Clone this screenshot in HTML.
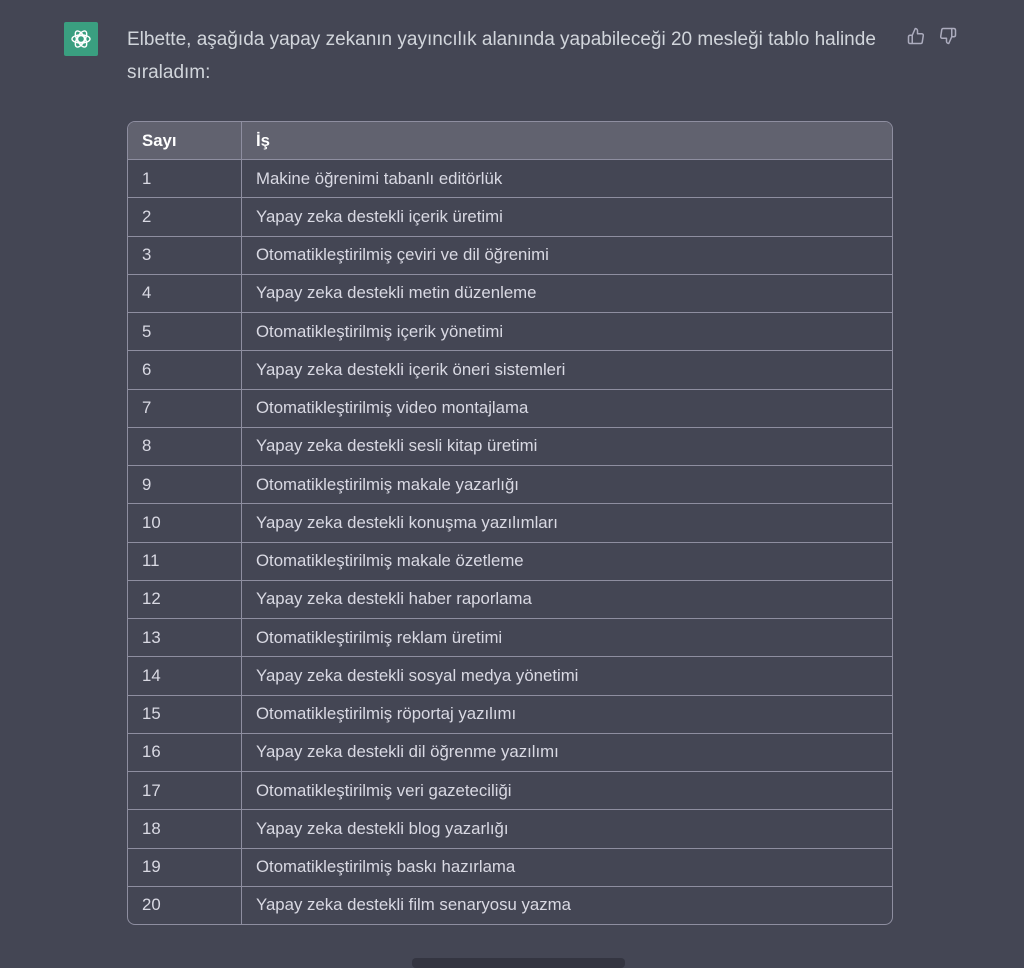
<!DOCTYPE html>
<html><head><meta charset="utf-8"><style>
body{margin:0;width:1024px;height:962px;background:#444654;font-family:"Liberation Sans",Helvetica,Arial,sans-serif;color:#ececf1;overflow:hidden;position:relative}
.av{position:absolute;left:64px;top:22px;width:34px;height:34px;background:#3a9f80;border-radius:2px;display:flex;align-items:center;justify-content:center}
.txt{position:absolute;left:127px;top:23px;width:760px;font-size:19px;line-height:33px;color:#d1d5db}
.icons{position:absolute;left:907px;top:27px;display:flex;gap:14px}
table{position:absolute;left:127px;top:121px;width:766px;border-collapse:separate;border-spacing:0;border:1px solid #8e8ea0;border-radius:8px;overflow:hidden;font-size:16.8px;color:#d9d9e3}
th,td{height:37.25px;padding:0 0 0 14px;text-align:left;border-bottom:1px solid #8e8ea0}
th{background:#61626f;font-weight:bold;height:37px;color:#fff}
tr:last-child td{border-bottom:none}
td:first-child,th:first-child{width:99px;border-right:1px solid #8e8ea0}
.bot{position:absolute;left:412px;top:958px;width:213px;height:10px;background:#343541;border-radius:4px}
</style></head><body>
<div class="av"><svg width="24" height="24" viewBox="0 0 24 24" fill="none" stroke="#fff" stroke-width="1.4"><circle cx="12" cy="12" r="3.5"/><ellipse cx="12" cy="12" rx="9" ry="4"/><ellipse cx="12" cy="12" rx="9" ry="4" transform="rotate(60 12 12)"/><ellipse cx="12" cy="12" rx="9" ry="4" transform="rotate(120 12 12)"/></svg></div>
<div class="txt">Elbette, aşağıda yapay zekanın yayıncılık alanında yapabileceği 20 mesleği tablo halinde sıraladım:</div>
<div class="icons">
<svg width="18" height="18" viewBox="0 0 24 24" fill="none" stroke="#acacbe" stroke-width="2" stroke-linejoin="round"><path d="M14 9V5a3 3 0 0 0-3-3l-4 9v11h11.3a2 2 0 0 0 2-1.7l1.4-9a2 2 0 0 0-2-2.3z"/><path d="M7 22H4a2 2 0 0 1-2-2v-7a2 2 0 0 1 2-2h3"/></svg>
<svg width="18" height="18" viewBox="0 0 24 24" fill="none" stroke="#acacbe" stroke-width="2" stroke-linejoin="round"><path d="M10 15v4a3 3 0 0 0 3 3l4-9V2H5.7a2 2 0 0 0-2 1.7l-1.4 9a2 2 0 0 0 2 2.3z"/><path d="M17 2h2.7A2.3 2.3 0 0 1 22 4v7a2.3 2.3 0 0 1-2.3 2H17"/></svg>
</div>
<table>
<tr><th>Sayı</th><th>İş</th></tr>
<tr><td>1</td><td>Makine öğrenimi tabanlı editörlük</td></tr>
<tr><td>2</td><td>Yapay zeka destekli içerik üretimi</td></tr>
<tr><td>3</td><td>Otomatikleştirilmiş çeviri ve dil öğrenimi</td></tr>
<tr><td>4</td><td>Yapay zeka destekli metin düzenleme</td></tr>
<tr><td>5</td><td>Otomatikleştirilmiş içerik yönetimi</td></tr>
<tr><td>6</td><td>Yapay zeka destekli içerik öneri sistemleri</td></tr>
<tr><td>7</td><td>Otomatikleştirilmiş video montajlama</td></tr>
<tr><td>8</td><td>Yapay zeka destekli sesli kitap üretimi</td></tr>
<tr><td>9</td><td>Otomatikleştirilmiş makale yazarlığı</td></tr>
<tr><td>10</td><td>Yapay zeka destekli konuşma yazılımları</td></tr>
<tr><td>11</td><td>Otomatikleştirilmiş makale özetleme</td></tr>
<tr><td>12</td><td>Yapay zeka destekli haber raporlama</td></tr>
<tr><td>13</td><td>Otomatikleştirilmiş reklam üretimi</td></tr>
<tr><td>14</td><td>Yapay zeka destekli sosyal medya yönetimi</td></tr>
<tr><td>15</td><td>Otomatikleştirilmiş röportaj yazılımı</td></tr>
<tr><td>16</td><td>Yapay zeka destekli dil öğrenme yazılımı</td></tr>
<tr><td>17</td><td>Otomatikleştirilmiş veri gazeteciliği</td></tr>
<tr><td>18</td><td>Yapay zeka destekli blog yazarlığı</td></tr>
<tr><td>19</td><td>Otomatikleştirilmiş baskı hazırlama</td></tr>
<tr><td>20</td><td>Yapay zeka destekli film senaryosu yazma</td></tr>
</table>
<div class="bot"></div>
</body></html>
